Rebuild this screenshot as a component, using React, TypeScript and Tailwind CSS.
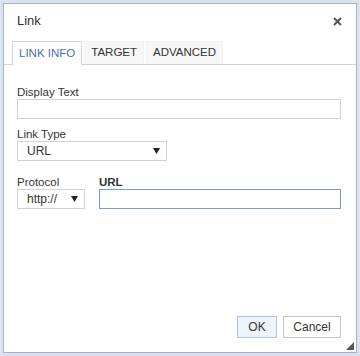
import { useState } from "react";

function Arrow() {
  return (
    <svg width="7" height="6" viewBox="0 0 7 6" className="shrink-0">
      <path d="M0 0 H7 L3.5 6 Z" fill="#222" />
    </svg>
  );
}

export default function App() {
  const [tab, setTab] = useState("info");
  const tabs = [
    { id: "info", label: "LINK INFO" },
    { id: "target", label: "TARGET" },
    { id: "advanced", label: "ADVANCED" },
  ];

  return (
    <div
      className="w-[360px] h-[356px] bg-[#dde3ed] p-[3px]"
      style={{ fontFamily: '"Liberation Sans", Arial, sans-serif' }}
    >
      <div className="relative flex h-full flex-col border border-[#9fb2d2] bg-white text-[#333]">
        {/* Title */}
        <div className="flex h-[34px] shrink-0 items-center justify-between pl-[13px] pr-[14px]">
          <span className="text-[13px]">Link</span>
          <svg width="9" height="9" viewBox="0 0 9 9">
            <path d="M1 1 L8 8 M8 1 L1 8" stroke="#555" strokeWidth="2" />
          </svg>
        </div>

        {/* Tabs */}
        <div className="mt-[3px] flex h-[24px] shrink-0 items-end gap-[2px] border-b border-[#d3d3d3] pl-[8px]">
          {tabs.map((t) =>
            t.id === tab ? (
              <button
                key={t.id}
                onClick={() => setTab(t.id)}
                className="-mb-px flex h-[24px] items-center border border-b-0 border-[#d3d3d3] bg-white px-[6px] text-[11.5px] text-[#4a6fae]"
              >
                {t.label}
              </button>
            ) : (
              <button
                key={t.id}
                onClick={() => setTab(t.id)}
                className="flex h-[23px] items-center border border-b-0 border-[#f1f1f1] bg-[#f7f7f7] px-[6px] text-[11.5px] text-[#333]"
              >
                {t.label}
              </button>
            )
          )}
        </div>

        {/* Body */}
        <div className="flex flex-1 flex-col pl-[13px] pr-[15px] pt-[20px] text-[11.5px]">
          <label className="leading-[14px]">Display Text</label>
          <div className="h-[20px] border border-[#d0d0d0] bg-white" />

          <label className="mt-[8px] leading-[14px]">Link Type</label>
          <div className="flex h-[20px] w-[150px] items-center justify-between border border-[#d3d3d3] bg-white pl-[9px] pr-[6px] text-[12px]">
            <span>URL</span>
            <Arrow />
          </div>

          <div className="mt-[14px] flex gap-[14px]">
            <div className="flex flex-col">
              <label className="leading-[14px]">Protocol</label>
              <div className="flex h-[20px] w-[68px] items-center justify-between border border-[#d3d3d3] bg-white pl-[9px] pr-[6px] text-[12px]">
                <span>http://</span>
                <Arrow />
              </div>
            </div>
            <div className="flex flex-1 flex-col">
              <label className="font-bold leading-[14px]">URL</label>
              <div className="h-[20px] border border-[#7b9cd3] bg-white" />
            </div>
          </div>

          <div className="flex-1" />

          <div className="mb-[14px] flex justify-end gap-[6px] text-[12px]">
            <button className="h-[22px] w-[40px] border border-[#adc4e8] bg-[#eef4fc] text-[#333]">
              OK
            </button>
            <button className="h-[22px] w-[58px] border border-[#c6c6c6] bg-white text-[#333]">
              Cancel
            </button>
          </div>
        </div>

        <svg
          width="8"
          height="8"
          viewBox="0 0 8 8"
          className="absolute bottom-[2px] right-[2px]"
        >
          <path d="M8 0 V8 H0 Z" fill="#555" />
        </svg>
      </div>
    </div>
  );
}
